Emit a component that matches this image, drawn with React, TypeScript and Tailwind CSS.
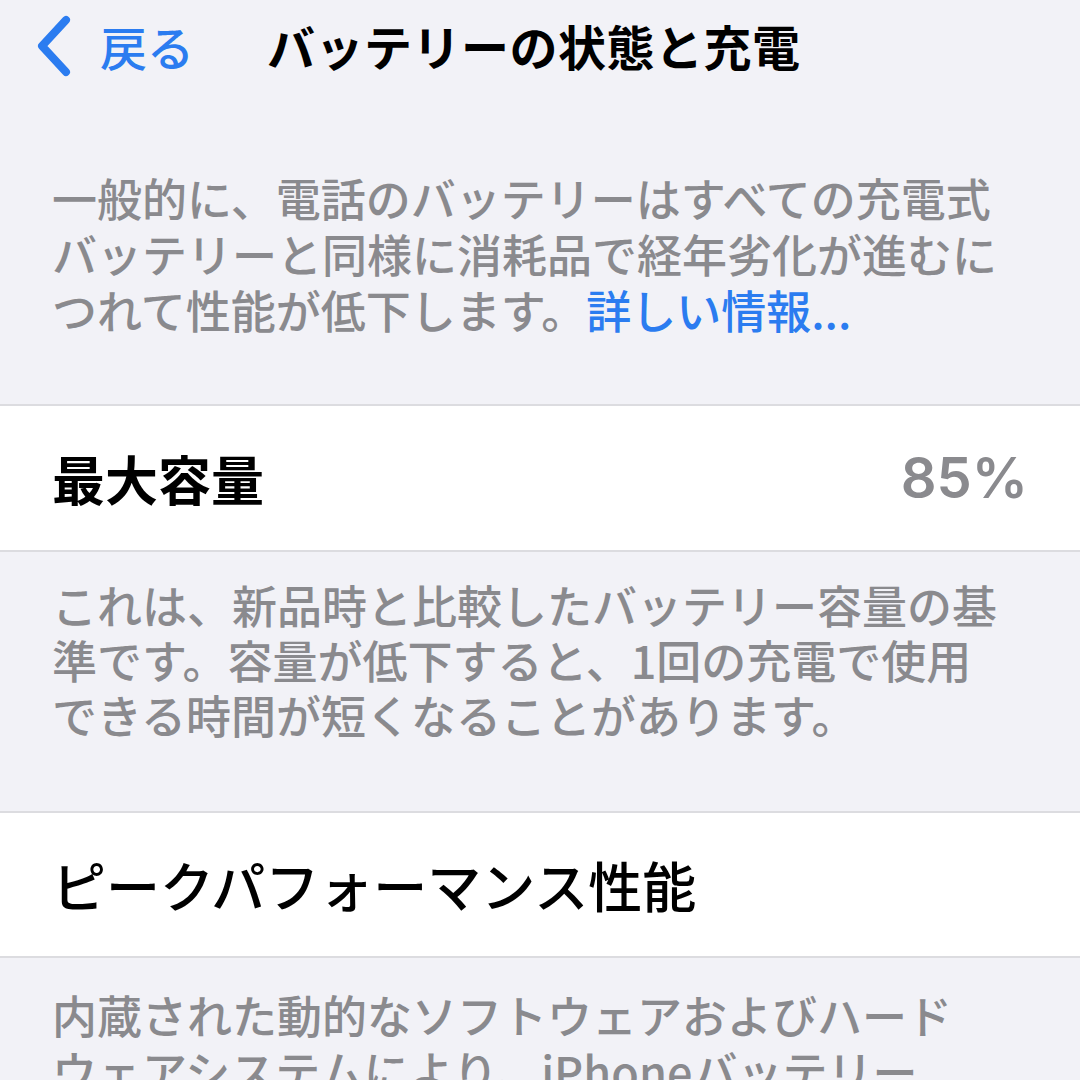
import React from "react";

const jp = { fontFamily: '"Noto Sans CJK JP", "Noto Sans", sans-serif' };

export default function App() {
  return (
    <div className="w-[1080px] h-[1080px] overflow-hidden bg-[#f2f2f7]" style={jp}>
      {/* Nav bar */}
      <div className="h-[90px] flex items-center pl-[34px]">
        <svg width="40" height="64" viewBox="0 0 40 64" className="mt-[2px]">
          <path d="M32 6 L8 32 L32 58" fill="none" stroke="#2b7cf0" strokeWidth="8" strokeLinecap="round" strokeLinejoin="round" />
        </svg>
        <span className="ml-[26px] text-[47px] leading-none font-medium text-[#2b7cf0]">戻る</span>
        <span className="ml-[73px] text-[48px] leading-none font-bold text-black tracking-[0.5px]">バッテリーの状態と充電</span>
      </div>

      {/* Paragraph 1 */}
      <div className="pt-[80px] pl-[52px] pb-[66px] text-[45px] leading-[56px] font-medium text-[#8a8a8e] whitespace-nowrap">
        一般的に、電話のバッテリーはすべての充電式
        <br />
        バッテリーと同様に消耗品で経年劣化が進むに
        <br />
        つれて性能が低下します。<span className="text-[#2b7cf0]">詳しい情報...</span>
      </div>

      {/* Max capacity row */}
      <div className="h-[148px] bg-white border-y-2 border-[#dcdce0] flex items-center justify-between pl-[52px] pr-[52px]">
        <span className="text-[53px] leading-none font-bold text-black">最大容量</span>
        <span className="text-[56px] leading-none text-[#8a8a8e] font-semibold" style={{ fontFamily: 'Inter, "Liberation Sans", sans-serif' }}>85%</span>
      </div>

      {/* Paragraph 2 */}
      <div className="pt-[25px] pl-[52px] pb-[69px] text-[45px] leading-[55px] font-medium text-[#8a8a8e] whitespace-nowrap">
        これは、新品時と比較したバッテリー容量の基
        <br />
        準です。容量が低下すると、1回の充電で使用
        <br />
        できる時間が短くなることがあります。
      </div>

      {/* Peak performance row */}
      <div className="h-[147px] bg-white border-y-2 border-[#dcdce0] flex items-center pl-[52px]">
        <span className="text-[54px] leading-none font-medium text-black">ピークパフォーマンス性能</span>
      </div>

      {/* Paragraph 3 */}
      <div className="pt-[29px] pl-[52px] text-[45px] leading-[56px] font-medium text-[#8a8a8e] whitespace-nowrap">
        内蔵された動的なソフトウェアおよびハード
        <br />
        ウェアシステムにより、iPhoneバッテリー
      </div>
    </div>
  );
}
